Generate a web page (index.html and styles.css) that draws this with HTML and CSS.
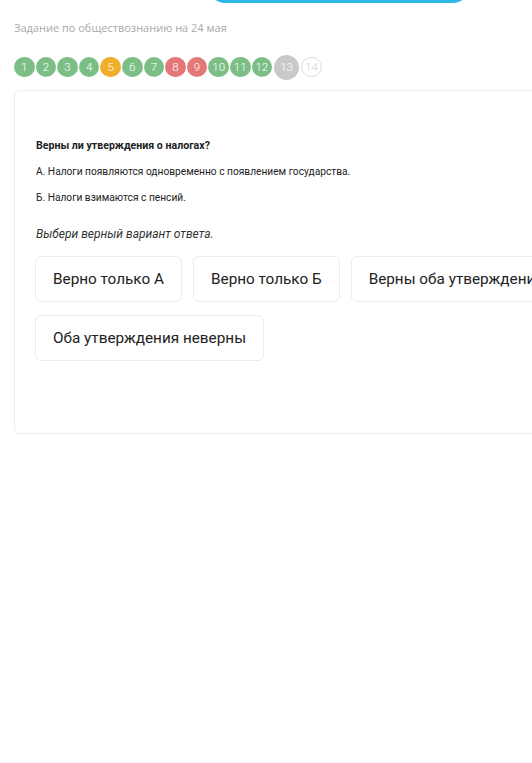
FILE: index.html
```html
<!DOCTYPE html>
<html lang="ru">
<head>
<meta charset="utf-8">
<title>Задание</title>
<link rel="stylesheet" href="styles.css">
</head>
<body>
<div class="topbar"><div class="topbtn"></div></div>
<div class="title">Задание по обществознанию на 24 мая</div>
<div class="steps">
  <span class="step ok">1</span>
  <span class="step ok">2</span>
  <span class="step ok">3</span>
  <span class="step ok">4</span>
  <span class="step warn">5</span>
  <span class="step ok">6</span>
  <span class="step ok">7</span>
  <span class="step bad">8</span>
  <span class="step bad">9</span>
  <span class="step ok">10</span>
  <span class="step ok">11</span>
  <span class="step ok">12</span>
  <span class="step current">13</span>
  <span class="step empty">14</span>
</div>
<div class="card">
  <p class="q">Верны ли утверждения о налогах?</p>
  <p class="line">А. Налоги появляются одновременно с появлением государства.</p>
  <p class="line">Б. Налоги взимаются с пенсий.</p>
  <p class="hint">Выбери верный вариант ответа.</p>
  <div class="answers">
    <div class="ans">Верно только А</div>
    <div class="ans">Верно только Б</div>
    <div class="ans">Верны оба утверждения</div>
    <div class="ans">Оба утверждения неверны</div>
  </div>
</div>
</body>
</html>
```
FILE: styles.css
```css
html { overflow-x: hidden; }
body {
  margin: 0;
  background: #fff;
  font-family: Roboto, "Noto Sans", sans-serif;
  color: #222;
  width: 532px;
  overflow: hidden;
}
.topbar {
  height: 3px;
  overflow: hidden;
  padding-left: 206px;
}
.topbtn {
  width: 266px;
  height: 40px;
  margin-top: -37px;
  border-radius: 20px;
  background: #2bb7e8;
}
.title {
  margin: 17px 0 0 14px;
  font-family: "Open Sans", sans-serif;
  font-size: 11px;
  color: #a9a9a9;
  line-height: 15px;
}
.steps {
  display: flex;
  align-items: center;
  gap: 1px;
  margin: 19px 0 0 14px;
  height: 26px;
}
.step {
  width: 20.6px;
  height: 20.6px;
  border-radius: 50%;
  display: flex;
  align-items: center;
  justify-content: center;
  font-family: Roboto, sans-serif;
  font-weight: 300;
  font-size: 11.5px;
  color: #fff;
  flex: none;
  box-sizing: border-box;
}
.ok { background: #7cbf86; }
.warn { background: #f0ae2b; }
.bad { background: #e47878; }
.current {
  width: 25px;
  height: 25px;
  background: #c9c9c9;
  margin: 0 1px;
}
.empty {
  border: 1px solid #dcdcdc;
  color: #cfcfcf;
  background: #fff;
}
.card {
  margin: 10px 0 0 14px;
  width: 640px;
  box-sizing: border-box;
  border: 1px solid #ececec;
  border-radius: 6px;
  padding: 48px 21px 72px 21px;
}
.q {
  margin: 0;
  font-weight: 700;
  font-size: 10.6px;
  line-height: 14px;
}
.line {
  margin: 12px 0 0 0;
  font-size: 10.2px;
  line-height: 14px;
}
.hint {
  margin: 21px 0 0 0;
  font-style: italic;
  font-size: 12px;
  line-height: 16px;
  color: #333;
}
.answers {
  display: flex;
  flex-wrap: wrap;
  gap: 13px 11px;
  margin-top: 14px;
  margin-left: -1px;
}
.ans {
  border: 1px solid #ececec;
  border-radius: 6px;
  padding: 0 17px;
  height: 46px;
  box-sizing: border-box;
  display: flex;
  align-items: center;
  font-size: 15.3px;
  color: #222;
}
```
